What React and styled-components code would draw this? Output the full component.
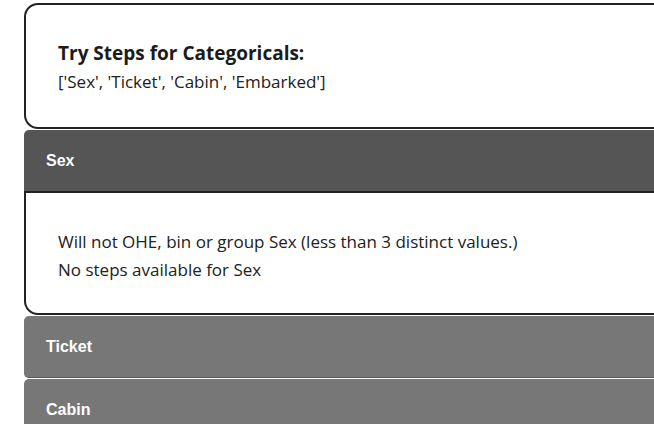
import React from 'react';
import styled, { createGlobalStyle } from 'styled-components';

const GlobalStyle = createGlobalStyle`
    body {
        margin: 0;
        background: #fff;
        overflow: hidden;
        font-family: "Open Sans", "Noto Sans", sans-serif;
        color: #212121;
    }
`;

const Page = styled.div`
    display: flex;
    flex-direction: column;
    gap: 1px;
    width: 680px;
    padding: 3px 0 0 24px;
`;

const InfoCard = styled.div`
    border: 2px solid #222;
    border-radius: 14px;
    padding: 33px 32px 31px;
    background: #fff;
`;

const Title = styled.div`
    font-weight: 700;
    font-size: 19px;
    line-height: 30px;
    color: #1b1b1b;
`;

const Line = styled.div`
    font-size: 17px;
    line-height: 28px;
`;

const Header = styled.div`
    display: flex;
    align-items: center;
    height: 61px;
    padding-left: 22px;
    background: ${(p) => (p.open ? '#555' : '#777')};
    border-radius: ${(p) => (p.open ? '5px 5px 0 0' : '5px')};
    border-bottom: ${(p) => (p.open ? '2px solid #222' : '1px solid #5a5a5a')};
    font-family: "Liberation Sans", Arial, sans-serif;
    font-weight: 700;
    font-size: 16px;
    color: #fff;
`;

const Body = styled.div`
    border: 2px solid #222;
    border-top: none;
    border-radius: 0 0 14px 14px;
    padding: 35px 32px 29px;
`;

const Section = styled.div`
    display: flex;
    flex-direction: column;
`;

const sections = [
    {
        name: 'Sex',
        open: true,
        lines: [
            'Will not OHE, bin or group Sex (less than 3 distinct values.)',
            'No steps available for Sex',
        ],
    },
    { name: 'Ticket', open: false },
    { name: 'Cabin', open: false },
];

const App = () => {
    return (
        <>
            <GlobalStyle />
            <Page>
                <InfoCard>
                    <Title>Try Steps for Categoricals:</Title>
                    <Line>['Sex', 'Ticket', 'Cabin', 'Embarked']</Line>
                </InfoCard>
                {sections.map((s) => (
                    <Section key={s.name}>
                        <Header open={s.open}>{s.name}</Header>
                        {s.open && (
                            <Body>
                                {s.lines.map((l) => (
                                    <Line key={l}>{l}</Line>
                                ))}
                            </Body>
                        )}
                    </Section>
                ))}
            </Page>
        </>
    );
};

export default App;
